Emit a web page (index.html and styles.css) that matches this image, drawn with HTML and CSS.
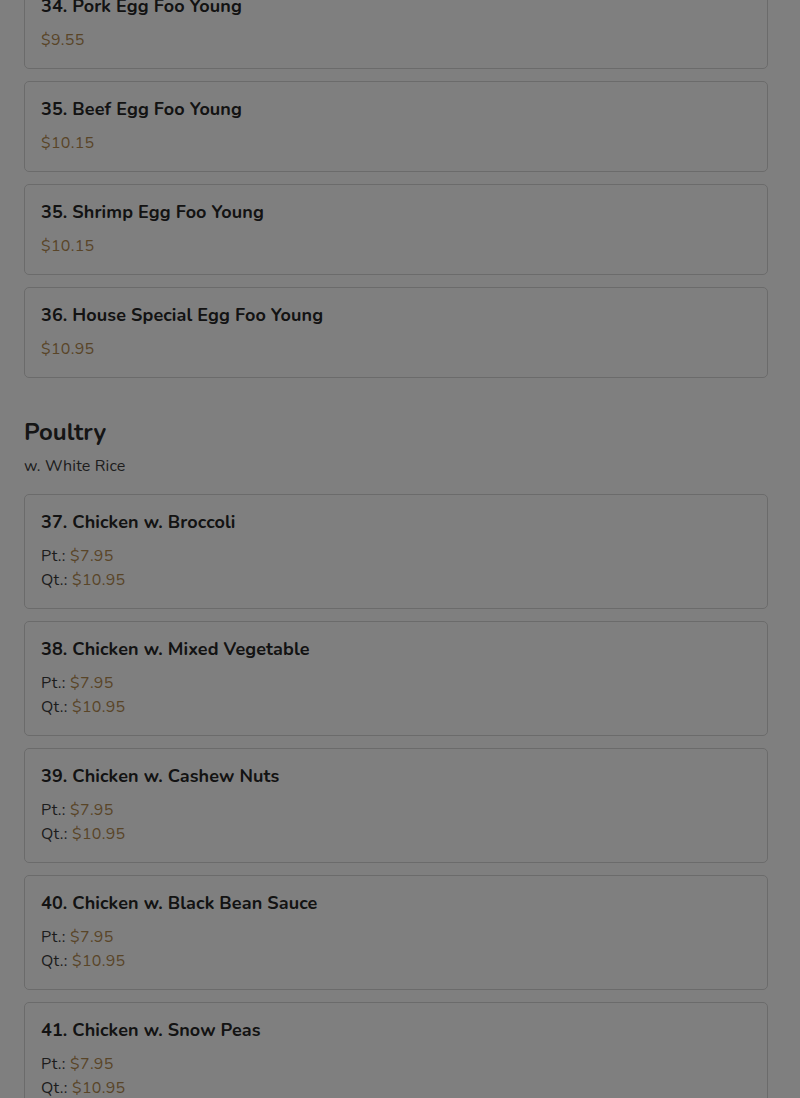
FILE: index.html
```html
<!DOCTYPE html>
<html lang="en">
<head>
<meta charset="utf-8">
<title>Menu</title>
<link rel="stylesheet" href="styles.css">
</head>
<body>
<main class="menu">
  <section class="section section-first">
    <div class="item">
      <h5 class="item-name">34. Pork Egg Foo Young</h5>
      <div class="price-line"><span class="price">$9.55</span></div>
    </div>
    <div class="item">
      <h5 class="item-name">35. Beef Egg Foo Young</h5>
      <div class="price-line"><span class="price">$10.15</span></div>
    </div>
    <div class="item">
      <h5 class="item-name">35. Shrimp Egg Foo Young</h5>
      <div class="price-line"><span class="price">$10.15</span></div>
    </div>
    <div class="item">
      <h5 class="item-name">36. House Special Egg Foo Young</h5>
      <div class="price-line"><span class="price">$10.95</span></div>
    </div>
  </section>

  <section class="section">
    <h2 class="section-title">Poultry</h2>
    <p class="section-note">w. White Rice</p>
    <div class="item">
      <h5 class="item-name">37. Chicken w. Broccoli</h5>
      <div class="price-line">Pt.: <span class="price">$7.95</span></div>
      <div class="price-line">Qt.: <span class="price">$10.95</span></div>
    </div>
    <div class="item">
      <h5 class="item-name">38. Chicken w. Mixed Vegetable</h5>
      <div class="price-line">Pt.: <span class="price">$7.95</span></div>
      <div class="price-line">Qt.: <span class="price">$10.95</span></div>
    </div>
    <div class="item">
      <h5 class="item-name">39. Chicken w. Cashew Nuts</h5>
      <div class="price-line">Pt.: <span class="price">$7.95</span></div>
      <div class="price-line">Qt.: <span class="price">$10.95</span></div>
    </div>
    <div class="item">
      <h5 class="item-name">40. Chicken w. Black Bean Sauce</h5>
      <div class="price-line">Pt.: <span class="price">$7.95</span></div>
      <div class="price-line">Qt.: <span class="price">$10.95</span></div>
    </div>
    <div class="item">
      <h5 class="item-name">41. Chicken w. Snow Peas</h5>
      <div class="price-line">Pt.: <span class="price">$7.95</span></div>
      <div class="price-line">Qt.: <span class="price">$10.95</span></div>
    </div>
    <div class="item">
      <h5 class="item-name">42. Chicken w. Garlic Sauce</h5>
      <div class="price-line">Pt.: <span class="price">$7.95</span></div>
      <div class="price-line">Qt.: <span class="price">$10.95</span></div>
    </div>
  </section>
</main>
<div class="backdrop"></div>
</body>
</html>
```

FILE: styles.css
```css
html, body {
  margin: 0;
  padding: 0;
  background: #ffffff;
  overflow: hidden;
}
body {
  font-family: "Nunito", "Lato", "Open Sans", sans-serif;
  color: #333333;
  font-size: 16px;
  line-height: 1.5;
}
.menu {
  padding: 0 32px 0 24px;
  margin-top: -22px;
}
.section {
  display: flex;
  flex-direction: column;
  gap: 12px;
}
.section + .section {
  margin-top: 40px;
}
.section-title {
  font-size: 24px;
  font-weight: 700;
  line-height: 1.2;
  margin: 0;
  color: #2a2a2a;
}
.section-note {
  margin: -5px 0 4px;
  line-height: 24px;
  color: #3a3a3a;
  letter-spacing: 0.15px;
}
.item {
  border: 1px solid #d6d6d6;
  border-radius: 5px;
  padding: 16px;
  background: #ffffff;
}
.item-name {
  margin: 0 0 9px;
  font-size: 18px;
  font-weight: 700;
  line-height: 22px;
  padding-top: 0;
  padding-bottom: 2px;
  color: #262626;
  letter-spacing: 0.1px;
}
.price-line {
  line-height: 24px;
  color: #3a3a3a;
  letter-spacing: 0.3px;
}
.price {
  color: #b38a50;
}
.backdrop {
  position: fixed;
  inset: 0;
  background: rgba(0, 0, 0, 0.5);
}
```
